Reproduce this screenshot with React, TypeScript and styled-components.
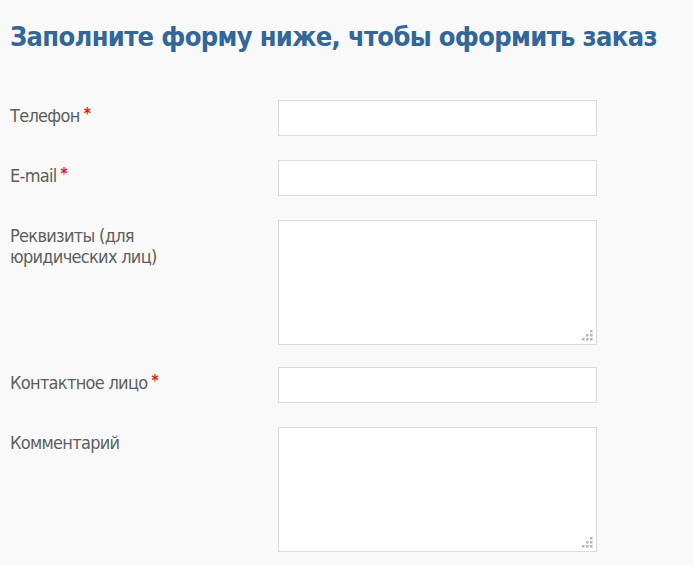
import React from "react";
import styled, { createGlobalStyle } from "styled-components";

const Global = createGlobalStyle`
  html, body { margin: 0; padding: 0; background: #f9f9f9; }
  body { font-family: "DejaVu Sans Condensed", "Liberation Sans Narrow", "Liberation Sans", sans-serif; }
`;

const Page = styled.div`
  padding: 19px 10px 0 10px;
`;

const Title = styled.h1`
  margin: 0 0 45px 0;
  font-size: 27px;
  line-height: 36px;
  font-weight: 700;
  letter-spacing: -0.65px;
  color: #336699;
  white-space: nowrap;
`;

const Form = styled.form`
  display: flex;
  flex-direction: column;
`;

const Row = styled.div<{ $gap: number }>`
  display: grid;
  grid-template-columns: 268px 319px;
  margin-bottom: ${(p) => p.$gap}px;
`;

const Label = styled.label`
  display: block;
  width: 165px;
  padding-top: 5px;
  font-size: 18px;
  line-height: 21px;
  letter-spacing: -0.7px;
  color: #5e5e5e;
`;

const Star = styled.span`
  color: #e8141b;
  font-size: 15px;
  vertical-align: top;
  position: relative;
  top: -1px;
  margin-left: 4px;
  font-weight: 700;
`;

const Input = styled.input`
  box-sizing: border-box;
  width: 319px;
  height: 36px;
  margin: 0;
  border: 1px solid #dcdcdc;
  background: #fff;
  outline: none;
`;

const AreaWrap = styled.div`
  position: relative;
  width: 319px;
  height: 125px;
`;

const Area = styled.textarea`
  box-sizing: border-box;
  display: block;
  width: 319px;
  height: 125px;
  margin: 0;
  border: 1px solid #dcdcdc;
  background: #fff;
  resize: none;
  outline: none;
`;

const Grip = styled.svg`
  position: absolute;
  right: 4px;
  bottom: 4px;
  width: 11px;
  height: 11px;
`;

const GripIcon = () => (
  <Grip viewBox="0 0 11 11">
    {[
      [8, 0],
      [4, 4],
      [8, 4],
      [0, 8],
      [4, 8],
      [8, 8],
    ].map(([x, y], i) => (
      <rect key={i} x={x} y={y} width="2.5" height="2.5" fill="#b5b5b5" />
    ))}
  </Grip>
);

const fields: { label: string; required: boolean; area: boolean; gap: number }[] = [
  { label: "Телефон", required: true, area: false, gap: 24 },
  { label: "E-mail", required: true, area: false, gap: 24 },
  { label: "Реквизиты (для юридических лиц)", required: false, area: true, gap: 22 },
  { label: "Контактное лицо", required: true, area: false, gap: 24 },
  { label: "Комментарий", required: false, area: true, gap: 0 },
];

export default function App() {
  return (
    <>
      <Global />
      <Page>
        <Title>Заполните форму ниже, чтобы оформить заказ</Title>
        <Form>
          {fields.map((f) => (
            <Row key={f.label} $gap={f.gap}>
              <Label>
                {f.label}
                {f.required && <Star>*</Star>}
              </Label>
              {f.area ? (
                <AreaWrap>
                  <Area />
                  <GripIcon />
                </AreaWrap>
              ) : (
                <Input />
              )}
            </Row>
          ))}
        </Form>
      </Page>
    </>
  );
}
